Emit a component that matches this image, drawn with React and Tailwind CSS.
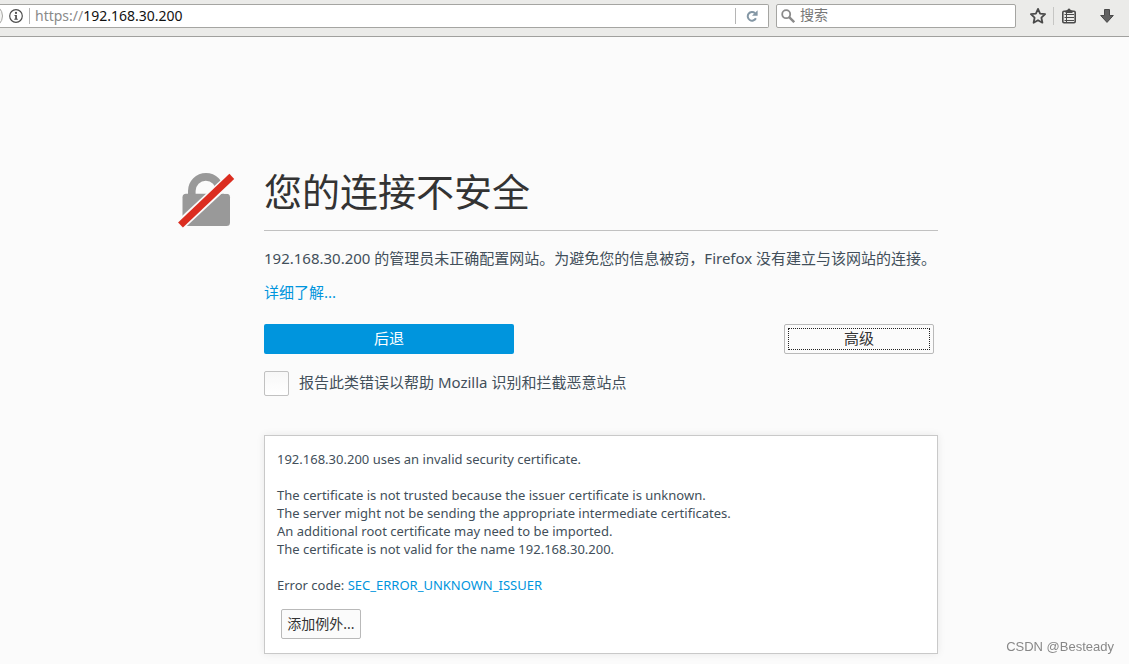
import React from "react";

function InfoIcon() {
  return (
    <svg width="14" height="14" viewBox="0 0 14 14" aria-hidden="true">
      <circle cx="7" cy="7" r="6.3" fill="none" stroke="#4d4d4d" strokeWidth="1.2" />
      <circle cx="7" cy="3.9" r="1.1" fill="#4d4d4d" />
      <path d="M5.5 6h2.4v3.8h.9v1H5.3v-1h.9V7h-.7z" fill="#4d4d4d" />
    </svg>
  );
}

function ReloadIcon() {
  return (
    <svg width="12" height="12" viewBox="0 0 12 12" aria-hidden="true">
      <path d="M9 3.2A4.3 4.3 0 1 0 9.9 8.3" fill="none" stroke="#8497a5" strokeWidth="2" />
      <path d="M11.6.2v5.6H6z" fill="#8497a5" />
    </svg>
  );
}

function SearchIcon() {
  return (
    <svg width="14" height="14" viewBox="0 0 14 14" aria-hidden="true">
      <circle cx="5.2" cy="5.2" r="4" fill="none" stroke="#8a8a8a" strokeWidth="1.8" />
      <path d="M8.2 8.2l5 5" stroke="#8a8a8a" strokeWidth="2.4" />
    </svg>
  );
}

function StarIcon() {
  return (
    <svg width="18" height="18" viewBox="0 0 18 18" aria-hidden="true">
      <path
        d="M9 1.9l2.1 4.7 5 .6-3.7 3.5 1 5L9 13.2l-4.4 2.5 1-5L1.9 7.2l5-.6z"
        fill="none"
        stroke="#4a4a4a"
        strokeWidth="1.8"
        strokeLinejoin="round"
      />
    </svg>
  );
}

function ClipboardIcon() {
  return (
    <svg width="14" height="16" viewBox="0 0 14 16" aria-hidden="true">
      <path d="M3.500 3.500L7 .3l3.500 3.200z" fill="#4a4a4a" />
      <rect x=".8" y="3.300" width="12.400" height="11.400" rx="1.200" fill="#ebebe9" stroke="#4a4a4a" strokeWidth="1.600" />
      <path d="M3.500 2.500h7v2.500h-7z" fill="#4a4a4a" />
      <path d="M2.500 6.500h1.500M2.500 9.500h1.500M2.500 12.500h1.500M5 6.500h7M5 9.500h7M5 12.500h7" stroke="#4a4a4a" strokeWidth="1" />
      <path d="M4.500 5v9" stroke="#4a4a4a" strokeWidth="1" />
    </svg>
  );
}

function DownloadIcon() {
  return (
    <svg width="14" height="16" viewBox="0 0 14 16" aria-hidden="true">
      <path d="M4.500 1.500h5v6h3.800L7 14.400.7 7.500h3.800z" fill="#626262" stroke="#4a4a4a" strokeWidth="1" strokeLinejoin="round" />
    </svg>
  );
}

function InsecureLock() {
  return (
    <svg width="57" height="57" viewBox="0 0 57 57" aria-hidden="true">
      <path
        d="M10 22V19a18 18 0 0 1 36 0v3h-8v-3a10.200 10.200 0 0 0-20.400 0v3z"
        fill="#999"
      />
      <rect x="4.500" y="21.700" width="47.500" height="32.300" rx="3.500" fill="#999" />
      <path d="M40 14.500l14 0v7.200H33z" fill="#fbfbfb" />
      <path d="M-.500 55.500L57 2" stroke="#fbfbfb" strokeWidth="10.500" />
      <path d="M2.500 53L53.800 4.400" stroke="#db2d20" strokeWidth="7" />
    </svg>
  );
}

function Toolbar() {
  return (
    <header className="flex h-[37px] items-start border-b border-[#a0a09e] bg-[#ebebe9] pt-1">
      <div className="flex h-6 min-w-0 flex-1 items-center overflow-hidden rounded-r-xs border border-l-0 border-[#a5a5a2] bg-white">
        <span className="-ml-[21px] h-6 w-6 shrink-0 rounded-full border border-[#a5a5a2] bg-[#f4f4f3]" />
        <button aria-label="站点信息" className="ml-1.5 shrink-0">
          <InfoIcon />
        </button>
        <span className="ml-1.5 h-4 w-px bg-[#b5b5b5]" />
        <a href="https://192.168.30.200" className="ml-[5px] flex-1 text-sm leading-5 text-[#8a8a8a]">
          https://<span className="text-[#111]">192.168.30.200</span>
        </a>
        <span className="h-4 w-px bg-[#b5b5b5]" />
        <button aria-label="重新载入" className="flex h-full w-8 items-center justify-center">
          <ReloadIcon />
        </button>
      </div>
      <label className="ml-[7px] flex h-6 w-60 items-center gap-[5px] rounded-xs border border-[#a5a5a2] bg-white pl-1">
        <SearchIcon />
        <input
          aria-label="搜索"
          placeholder="搜索"
          className="min-w-0 flex-1 bg-transparent pb-0.5 text-sm leading-5 outline-none placeholder:text-[#777]"
        />
      </label>
      <nav className="flex h-6 items-center pr-[15px] pl-[13px]">
        <button aria-label="添加书签">
          <StarIcon />
        </button>
        <span className="ml-1.5 h-[18px] w-px bg-[#c6c6c4]" />
        <button aria-label="书签" className="ml-2">
          <ClipboardIcon />
        </button>
        <button aria-label="下载" className="ml-6">
          <DownloadIcon />
        </button>
      </nav>
    </header>
  );
}

function CertificateDetails() {
  return (
    <section className="mt-[39px] border border-[#c9c9c9] bg-white px-3 py-3.5 shadow-[0_0_8px_rgba(0,0,0,0.08)]">
      <div className="text-[13px] leading-[18px]">
        <p>192.168.30.200 uses an invalid security certificate.</p>
        <p className="mt-[18px]">
          The certificate is not trusted because the issuer certificate is unknown.
          <br />
          The server might not be sending the appropriate intermediate certificates.
          <br />
          An additional root certificate may need to be imported.
          <br />
          The certificate is not valid for the name 192.168.30.200.
        </p>
        <p className="mt-[18px]">
          Error code:{" "}
          <a href="#technical" className="text-[#0095dd]">
            SEC_ERROR_UNKNOWN_ISSUER
          </a>
        </p>
      </div>
      <button className="mt-[15px] ml-1 h-[30px] w-20 rounded-xs border border-[#b9b9b9] bg-[#fbfbfb] pb-px text-sm text-[#333]">
        添加例外...
      </button>
    </section>
  );
}

export default function App() {
  return (
    <div className="flex min-h-screen flex-col bg-[#fbfbfb] font-['Noto_Sans','Noto_Sans_CJK_SC',sans-serif] text-[#424f5a]">
      <Toolbar />
      <main className="mx-auto flex w-full max-w-[773px] items-start pt-[133px] pr-[13px]">
        <div className="w-[86px] shrink-0 pt-0.5">
          <InsecureLock />
        </div>
        <div className="min-w-0 flex-1 text-[15px] leading-[22px]">
          <h1 className="border-b border-[#c1c1c1] pb-[17px] text-[38px] leading-[43px] font-normal text-[#333]">
            您的连接不安全
          </h1>
          <p className="mt-4 whitespace-nowrap">
            192.168.30.200 的管理员未正确配置网站。为避免您的信息被窃，Firefox 没有建立与该网站的连接。
          </p>
          <p className="mt-3">
            <a href="#learn-more" className="text-[#0095dd]">
              详细了解...
            </a>
          </p>
          <div className="mt-[21px] flex justify-between pr-1">
            <button className="h-[30px] w-[250px] rounded-xs bg-[#0095dd] pb-0.5 text-white">后退</button>
            <button className="h-[30px] w-[150px] rounded-xs border border-[#b9b9b9] bg-[#fbfbfb] p-[3px] text-[#333]">
              <span className="flex h-full items-center justify-center border border-dotted border-[#222] pb-0.5">高级</span>
            </button>
          </div>
          <div className="mt-[17px] flex items-center gap-2.5">
            <input
              id="report"
              type="checkbox"
              className="h-[25px] w-[25px] shrink-0 appearance-none rounded-xs border border-[#c1c1c1] bg-linear-to-b from-[#f7f7f7] to-white checked:bg-[#0095dd]"
            />
            <label htmlFor="report" className="pb-[3px]">
              报告此类错误以帮助 Mozilla 识别和拦截恶意站点
            </label>
          </div>
          <CertificateDetails />
        </div>
      </main>
      <footer className="fixed right-[15px] bottom-2 font-['Liberation_Sans',sans-serif] text-[13px] leading-[18px] text-[#888]">
        CSDN @Besteady
      </footer>
    </div>
  );
}
